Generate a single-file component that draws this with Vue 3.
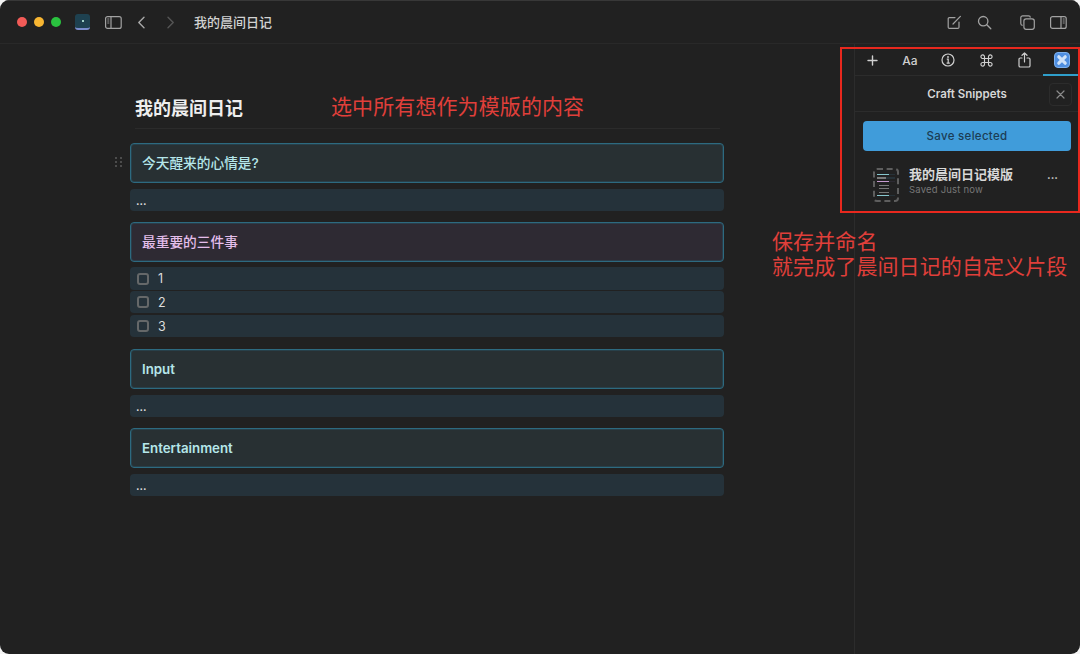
<script setup>
const tabs = ['plus', 'aa', 'info', 'cmd', 'share', 'x']
</script>

<template>
  <div class="win">
    <header class="bar">
      <div class="lights"><i class="r"></i><i class="y"></i><i class="g"></i></div>
      <div class="appicon"><span></span></div>
      <svg class="side" width="17" height="13" viewBox="0 0 17 13" fill="none" stroke="#a2a2a2" stroke-width="1.2"><rect x=".6" y=".6" width="15.6" height="11.8" rx="2"/><path d="M6 .6v11.8"/><path d="M2.3 3h2M2.3 5h2M2.3 7h2" stroke-width=".9"/></svg>
      <svg class="back" width="9" height="13" viewBox="0 0 9 13" fill="none" stroke="#a8a8a8" stroke-width="1.4" stroke-linecap="round" stroke-linejoin="round"><path d="M7 1.2 1.8 6.5 7 11.8"/></svg>
      <svg class="fwd" width="9" height="13" viewBox="0 0 9 13" fill="none" stroke="#555" stroke-width="1.4" stroke-linecap="round" stroke-linejoin="round"><path d="M2 1.2 7.2 6.5 2 11.8"/></svg>
      <div class="doc">我的晨间日记</div>
      <div class="right">
        <svg width="15" height="15" viewBox="0 0 15 15" fill="none" stroke="#a2a2a2" stroke-width="1.2" stroke-linecap="round"><path d="M8 2.6H2.4a1.2 1.2 0 0 0-1.2 1.2v8.4a1.2 1.2 0 0 0 1.2 1.2h8.4a1.2 1.2 0 0 0 1.2-1.2V7"/><path d="M6 9l7.4-7.6"/></svg>
        <svg class="search" width="15" height="15" viewBox="0 0 15 15" fill="none" stroke="#a2a2a2" stroke-width="1.3" stroke-linecap="round"><circle cx="6.2" cy="6.2" r="4.7"/><path d="m9.8 9.8 4 4"/></svg>
        <svg class="copy" width="15" height="15" viewBox="0 0 15 15" fill="none" stroke="#a2a2a2" stroke-width="1.2"><rect x="3.9" y="3.9" width="10.4" height="10.4" rx="2.2"/><path d="M2.6 10.4A1.9 1.9 0 0 1 .8 8.5V2.7A1.9 1.9 0 0 1 2.7.8h5.8a1.9 1.9 0 0 1 1.9 1.8"/></svg>
        <svg class="panel" width="17" height="13" viewBox="0 0 17 13" fill="none" stroke="#a2a2a2" stroke-width="1.2"><rect x=".6" y=".6" width="15.6" height="11.8" rx="2"/><path d="M11 .6v11.8"/><path d="M12.7 3h2M12.7 5h2M12.7 7h2" stroke-width=".9"/></svg>
      </div>
    </header>

    <div class="main">
      <section class="editor">
        <div class="doc-wrap">
          <h1 class="title">我的晨间日记</h1>
          <div class="blocks">
            <div class="drag"><i></i><i></i><i></i><i></i><i></i><i></i></div>
            <div class="head cyan cjk">今天醒来的心情是?</div>
            <div class="line dots">...</div>
            <div class="head purple cjk gap">最重要的三件事</div>
            <div class="list">
              <div class="line task"><span class="cb"></span>1</div>
              <div class="line task"><span class="cb"></span>2</div>
              <div class="line task"><span class="cb"></span>3</div>
            </div>
            <div class="head cyan gap">Input</div>
            <div class="line dots">...</div>
            <div class="head cyan gap">Entertainment</div>
            <div class="line dots">...</div>
          </div>
        </div>
      </section>

      <aside class="sidebar">
        <nav class="tabs">
          <span v-for="t in tabs" :key="t" class="tab" :class="{ on: t === 'x' }">
            <svg v-if="t === 'plus'" width="11" height="11" viewBox="0 0 11 11" stroke="#d0d0d0" stroke-width="1.4" stroke-linecap="round"><path d="M5.5 1v9M1 5.5h9"/></svg>
            <span v-else-if="t === 'aa'" class="aa">Aa</span>
            <svg v-else-if="t === 'info'" width="14" height="14" viewBox="0 0 14 14" fill="none" stroke="#cfcfcf" stroke-width="1.2"><circle cx="7" cy="7" r="6"/><circle cx="7" cy="4" r=".9" fill="#cfcfcf" stroke="none"/><path d="M5.8 6.2H7.2V10M5.6 10.2h3.2"/></svg>
            <svg v-else-if="t === 'cmd'" width="13" height="13" viewBox="0 0 13 13" fill="none" stroke="#cfcfcf" stroke-width="1.15"><path d="M4.5 4.5h4v4h-4zM4.5 4.5H3a1.8 1.8 0 1 1 1.5-1.5zM8.5 4.5V3A1.8 1.8 0 1 1 10 4.5zM8.5 8.5H10A1.8 1.8 0 1 1 8.5 10zM4.5 8.5V10A1.8 1.8 0 1 1 3 8.5z"/></svg>
            <svg v-else-if="t === 'share'" width="13" height="16" viewBox="0 0 13 16" fill="none" stroke="#cfcfcf" stroke-width="1.2" stroke-linecap="round" stroke-linejoin="round"><path d="M4 6H2.3A1.3 1.3 0 0 0 1 7.3v6.4A1.3 1.3 0 0 0 2.3 15h8.4a1.3 1.3 0 0 0 1.3-1.3V7.3A1.3 1.3 0 0 0 10.7 6H9"/><path d="M6.5 10V1M4 3.3 6.5 1 9 3.3"/></svg>
            <svg v-else width="16" height="16" viewBox="0 0 16 16"><rect x=".5" y=".5" width="15" height="15" rx="3.5" fill="#4f8fe2" stroke="#7fb2f0"/><path d="M4.8 4.8 11.2 11.2M11.2 4.8 4.8 11.2" stroke="#cfe2fa" stroke-width="3.2" stroke-linecap="round"/></svg>
          </span>
        </nav>
        <div class="snip-head">
          <span>Craft Snippets</span>
          <button class="close" type="button" aria-label="Close">
            <svg width="9" height="9" viewBox="0 0 9 9" stroke="#8a8a8a" stroke-width="1.2" stroke-linecap="round"><path d="M1 1l7 7M8 1 1 8"/></svg>
          </button>
        </div>
        <div class="snip-body">
          <button class="save" type="button">Save selected</button>
          <div class="item">
            <div class="thumb">
              <i class="row c"></i><i class="row g"></i><i class="row p"></i><i class="li"></i><i class="li"></i><i class="li"></i><i class="row c"></i>
            </div>
            <div class="meta">
              <div class="name">我的晨间日记模版</div>
              <div class="sub">Saved Just now</div>
            </div>
            <span class="more">···</span>
          </div>
        </div>
      </aside>
    </div>

    <div class="redbox"></div>
    <div class="note n1">选中所有想作为模版的内容</div>
    <div class="note n2">保存并命名<br>就完成了晨间日记的自定义片段</div>
  </div>
</template>

<style>
html, body { margin: 0; background: #f4f4f4; }
</style>

<style scoped>
.win {
  position: relative; width: 1080px; height: 654px; overflow: hidden;
  display: flex; flex-direction: column;
  background: #212121; color: #ddd; border-radius: 9px;
  font-family: Inter, "Noto Sans CJK SC", sans-serif;
}
.bar {
  height: 44px; flex: none; display: flex; align-items: center; box-sizing: border-box;
  border-top: 1px solid #383838; border-bottom: 1px solid #292929; padding-left: 17px;
}
.lights { display: flex; gap: 7px; }
.lights i { width: 10px; height: 10px; border-radius: 50%; display: block; }
.r { background: #f25b57; } .y { background: #f8b632; } .g { background: #2ac23f; }
.appicon {
  width: 15px; height: 16px; margin-left: 14px; border-radius: 3px;
  background: #1e4150; border-bottom: 2px solid #7a8ccc; box-sizing: border-box;
  display: flex; align-items: center; justify-content: center;
}
.appicon span { width: 2px; height: 2px; background: #cfe; border-radius: 50%; }
.side { margin-left: 15px; }
.back { margin-left: 15px; }
.fwd { margin-left: 20px; }
.doc { margin-left: 19px; padding-bottom: 2px; font-size: 13px; font-weight: 500; color: #d2d2d2; }
.right { margin-left: auto; padding-right: 13px; display: flex; align-items: center; }
.search { margin-left: 15px; }
.copy { margin-left: 28px; }
.panel { margin-left: 15px; }

.main { flex: 1; display: flex; min-height: 0; }
.editor { flex: 1; min-width: 0; padding: 50px 0 0 130px; }
.doc-wrap { width: 594px; }
.title {
  margin: 0 4px 0 5px; height: 35px; box-sizing: border-box; line-height: 29px;
  font-size: 18px; font-weight: 700; color: #eee; border-bottom: 1px solid #2b2b2b;
}
.blocks { position: relative; padding-top: 14px; }
.drag {
  position: absolute; left: -15px; top: 28px; width: 8px;
  display: grid; grid-template-columns: 2px 2px; gap: 2px 3px;
}
.drag i { width: 2px; height: 2px; background: #4c4c4c; }
.head {
  height: 40px; box-sizing: border-box; padding-left: 11px;
  display: flex; align-items: center;
  border: 1px solid #2d6a80; border-radius: 4px;
  box-shadow: inset 0 0 0 1px rgba(40, 90, 110, .4);
  font-size: 13.3px; font-weight: 600;
}
.cjk { font-size: 13.7px; font-weight: 500; padding-bottom: 3px; }
.cyan { background: #283033; color: #b5e6ea; }
.purple { background: #2e2a33; color: #e3bdea; }
.gap { margin-top: 11px; }
.line {
  height: 22px; margin-top: 6px; border-radius: 4px; background: #25323a;
  box-sizing: border-box; font-size: 12px; color: #ddd;
}
.dots { padding-left: 6px; line-height: 24px; font-size: 11px; font-weight: 600; }
.list { margin: 5px 0 12px; display: flex; flex-direction: column; }
.list + .gap { margin-top: 0; }
.list .line { margin-top: 2px; height: 22px; }
.list .line:first-child { margin-top: 0; height: 23px; }
.list .line:nth-child(2) { margin-top: 1px; }
.task { display: flex; align-items: center; padding-left: 7px; font-size: 12.5px; }
.cb {
  width: 12px; height: 12px; box-sizing: border-box; margin-right: 9px;
  border: 2px solid #656869; border-radius: 3px;
}

.sidebar { width: 226px; flex: none; border-left: 1px solid #2c2c2c; box-sizing: border-box; }
.tabs { height: 32px; display: flex; border-bottom: 1px solid #2c2c2c; box-sizing: border-box; }
.tab {
  width: 38px; height: 32px; flex: none; box-sizing: border-box;
  display: flex; align-items: center; justify-content: center;
}
.tab:first-child { width: 36px; padding-right: 2px; }
.tab.on { border-bottom: 2px solid #2f9fcb; padding-top: 1px; }
.aa { font-size: 12px; font-weight: 500; color: #cfcfcf; }
.snip-head {
  height: 36px; position: relative; display: flex; align-items: center; justify-content: center;
  border-bottom: 1px solid #2c2c2c; box-sizing: border-box;
  font-size: 11.5px; font-weight: 600; color: #d6d6d6; padding-right: 1px;
}
.close {
  position: absolute; right: 8px; top: 7px; width: 23px; height: 23px; padding: 0;
  display: flex; align-items: center; justify-content: center;
  background: transparent; border: 1px solid #2c2c2c; border-radius: 4px;
}
.snip-body { padding: 9px 8px 0; }
.save {
  display: block; width: 208px; height: 30px; padding: 0;
  background: #409cda; border: 0; border-radius: 4px;
  font: 500 11.5px Inter, "Noto Sans CJK SC", sans-serif; color: #1c3d55; letter-spacing: .3px;
}
.item { display: flex; align-items: center; margin-top: 17px; padding-left: 10px; }
.thumb {
  width: 26px; height: 34px; box-sizing: border-box; flex: none;
  border: 2px dashed #5e5e5e; border-radius: 4px;
  padding: 4px 2px; display: flex; flex-direction: column; gap: 2px;
}
.thumb i { display: block; height: 2px; }
.row { width: 18px; }
.row.c { background: linear-gradient(90deg, #86c6cd 12px, #273238 12px); }
.row.g { background: linear-gradient(90deg, #7a7a7a 9px, #273238 9px); }
.row.p { background: linear-gradient(90deg, #c79bd0 12px, #2c2a32 12px); }
.thumb .li { width: 10px; height: 1px; margin: 1px 0 0 2px; background: #777; }
.meta { margin-left: 10px; flex: 1; margin-top: -7px; }
.name { margin-top: -1px; font-size: 13px; line-height: 14px; font-weight: 700; color: #d8d8d8; }
.sub { margin-top: 2px; font-size: 9.5px; line-height: 13px; color: #777; letter-spacing: .2px; }
.more { margin: -14px 14px 0 0; font-size: 11px; font-weight: 700; color: #ccc; line-height: 14px; }

.redbox {
  position: absolute; left: 840px; top: 47px; width: 240px; height: 166px; box-sizing: border-box;
  border: 2px solid #e8281e; pointer-events: none;
}
.note { position: absolute; font-size: 21px; line-height: 25px; color: #e03f3a; white-space: nowrap; letter-spacing: .1px; }
.n1 { left: 331px; top: 94px; }
.n2 { left: 772px; top: 229px; }
</style>
